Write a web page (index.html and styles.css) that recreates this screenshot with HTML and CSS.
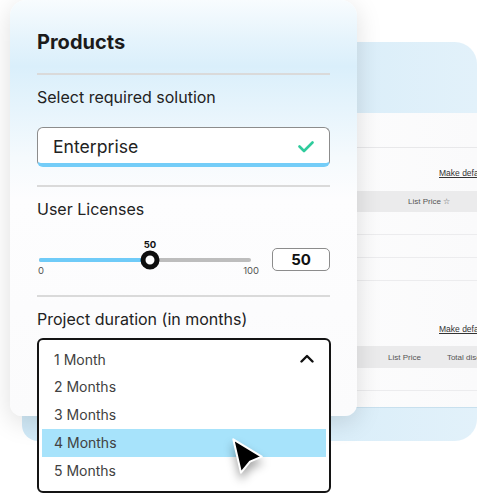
FILE: index.html
```html
<!DOCTYPE html>
<html>
<head>
<meta charset="utf-8">
<link rel="stylesheet" href="styles.css">
</head>
<body>
<div class="stage">
  <div class="back">
    <div class="panel">
      <div class="strip"></div>
      <div class="make make-1">Make default</div>
      <div class="thead thead-1"><span class="th">List Price ☆</span></div>
      <div class="trow"></div>
      <div class="trow"></div>
      <div class="trow"></div>
      <div class="make make-2">Make default</div>
      <div class="thead thead-2"><span class="th">List Price</span><span class="th">Total discount</span></div>
      <div class="trow"></div>
    </div>
  </div>

  <div class="card">
    <h1 class="title">Products</h1>
    <div class="divider div-1"></div>
    <div class="label">Select required solution</div>
    <div class="select">
      <span>Enterprise</span>
      <svg class="check" width="16" height="12" viewBox="0 0 16 12"><polyline points="1.5,5.5 6,10 14.5,1.5" fill="none" stroke="#2fcb9c" stroke-width="2.6" stroke-linecap="round" stroke-linejoin="round"/></svg>
    </div>
    <div class="divider div-2"></div>
    <div class="label">User Licenses</div>
    <div class="slider-row">
      <div class="slider">
        <div class="value-row"><span class="value" style="left:111px">50</span></div>
        <div class="track">
          <div class="fill" style="width:111px"></div>
          <div class="thumb" style="left:111px"></div>
        </div>
        <div class="minmax"><span>0</span><span>100</span></div>
      </div>
      <div class="numbox">50</div>
    </div>
    <div class="divider div-3"></div>
    <div class="label">Project duration (in months)</div>
    <div class="dropdown">
      <div class="opt opt-first"><span>1 Month</span>
        <svg class="chev" width="14" height="9" viewBox="0 0 14 9"><polyline points="1.5,7.5 7,2 12.5,7.5" fill="none" stroke="#111" stroke-width="2.4" stroke-linecap="round" stroke-linejoin="round"/></svg>
      </div>
      <div class="opt">2 Months</div>
      <div class="opt">3 Months</div>
      <div class="opt active">4 Months</div>
      <div class="opt">5 Months</div>
    </div>
  </div>

  <svg class="cursor" width="40" height="46" viewBox="0 0 40 46"><polygon points="5.3,4.3 33.7,21.7 22,26.7 13,37.7" fill="#000" stroke="#fff" stroke-width="2" stroke-linejoin="round"/></svg>
</div>
</body>
</html>
```

FILE: styles.css
```css
html, body {
  margin: 0;
  padding: 0;
  background: #ffffff;
  overflow: hidden;
}
body {
  font-family: Inter, "Noto Sans", "Liberation Sans", sans-serif;
  color: #1e1e1e;
}
.stage {
  position: relative;
  display: grid;
  width: 477px;
  height: 495px;
}

/* back card */
.back {
  grid-area: 1 / 1;
  align-self: start;
  justify-self: start;
  margin: 42px 0 0 22px;
  width: 455px;
  height: 399px;
  box-sizing: border-box;
  padding: 71px 0 33px;
  border-radius: 16px 22px 22px 16px;
  background: linear-gradient(90deg, #d0e9f7 0%, #d8edf9 60%, #e2f1fa 100%);
  display: flex;
  flex-direction: column;
  overflow: hidden;
}
.panel {
  flex: 1;
  background: linear-gradient(90deg, #f3f3f5 0%, #ffffff 30%, #fafafb 100%);
  border-bottom: 1px solid #c8e0ee;
  font-family: "Liberation Sans", Arial, sans-serif;
  font-size: 8px;
  color: #4a4a4a;
  display: flex;
  flex-direction: column;
}
.strip {
  height: 34px;
  border-bottom: 1px solid #e8e8ea;
  flex: none;
}
.make {
  line-height: 12px;
  height: 12px;
  padding-left: 417px;
  text-decoration: underline;
  color: #333;
  white-space: nowrap;
  flex: none;
  font-size: 8.5px;
}
.make-1 { margin-top: 19px; }
.make-2 { margin-top: 42px; }
.thead {
  flex: none;
  height: 21px;
  background: #ebebec;
  display: flex;
  align-items: center;
  white-space: nowrap;
  color: #555;
}
.thead-1 { margin-top: 12px; padding-left: 386px; }
.thead-2 { margin-top: 11px; height: 22px; padding-left: 366px; gap: 26px; }
.trow {
  flex: none;
  height: 22px;
  border-bottom: 1px solid #ececee;
}

/* front card */
.card {
  grid-area: 1 / 1;
  align-self: start;
  justify-self: start;
  position: relative;
  z-index: 1;
  margin-left: 10px;
  width: 347px;
  height: 416px;
  box-sizing: border-box;
  padding: 30px 27px 0;
  border-radius: 16px 16px 12px 12px;
  background: linear-gradient(180deg, #f8fcfe 0%, #e6f4fc 9%, #daeffb 16%, #e6f4fc 26%, #f5fafd 38%, #fdfdfe 48%, #fbfbfc 100%);
  box-shadow: 0 6px 26px rgba(0, 0, 0, 0.13);
}
.title {
  margin: 0;
  font-size: 20px;
  line-height: 24px;
  font-weight: 700;
  color: #1b1b1b;
}
.divider {
  height: 2px;
  background: #dadada;
}
.div-1 { margin-top: 19px; }
.div-2 { margin-top: 18px; }
.div-3 { margin-top: 19px; }
.label {
  margin-top: 12px;
  font-size: 16px;
  line-height: 20px;
  color: #222;
}
.select {
  margin-top: 20px;
  height: 40px;
  box-sizing: border-box;
  border: 1px solid #8c8c8c;
  border-bottom: 4px solid #74cdf8;
  border-radius: 6px;
  background: #ffffff;
  display: flex;
  align-items: center;
  justify-content: space-between;
  padding: 2px 15px 0 15px;
  font-size: 17.6px;
  color: #222;
}
.check { display: block; }

.slider-row {
  margin-top: 19.5px;
  display: flex;
  align-items: flex-start;
  gap: 13px;
}
.slider {
  width: 222px;
}
.value-row {
  position: relative;
  height: 12px;
  margin-left: 2px;
}
.value {
  position: absolute;
  top: 0;
  transform: translateX(-50%);
  font-size: 9.5px;
  line-height: 12px;
  font-weight: 700;
  color: #111;
}
.track {
  position: relative;
  margin: 7px 8px 0 2px;
  height: 4px;
  border-radius: 2px;
  background: #bdbdbd;
}
.fill {
  height: 4px;
  border-radius: 2px;
  background: #6fcbf8;
}
.thumb {
  position: absolute;
  top: 50%;
  width: 19px;
  height: 19px;
  box-sizing: border-box;
  border: 5px solid #0e0e0e;
  border-radius: 50%;
  background: #fff;
  transform: translate(-50%, -50%);
}
.minmax {
  margin-top: 4px;
  display: flex;
  justify-content: space-between;
  font-size: 9.5px;
  line-height: 10px;
  color: #555;
  padding-left: 1px;
}
.numbox {
  margin-top: 9.5px;
  width: 58px;
  height: 23px;
  box-sizing: border-box;
  border: 1px solid #8c8c8c;
  border-radius: 5px;
  background: #fff;
  display: flex;
  align-items: center;
  justify-content: center;
  font-size: 15px;
  font-weight: 700;
  color: #111;
}

.dropdown {
  margin-top: 9px;
  width: 294px;
  box-sizing: border-box;
  border: 2px solid #141414;
  border-radius: 6px;
  background: #ffffff;
  padding: 6px 3px 6px;
}
.opt {
  height: 28px;
  line-height: 28px;
  padding: 0 12px;
  font-size: 14px;
  color: #414141;
}
.opt-first {
  display: flex;
  align-items: center;
  justify-content: space-between;
  height: 27px;
  line-height: 27px;
}
.chev { display: block; margin-top: -2px; }
.opt.active {
  background: #a7e3fb;
}

.cursor {
  position: absolute;
  left: 228px;
  top: 435px;
  z-index: 2;
  filter: drop-shadow(0 6px 5px rgba(0, 0, 0, 0.35));
}
```
